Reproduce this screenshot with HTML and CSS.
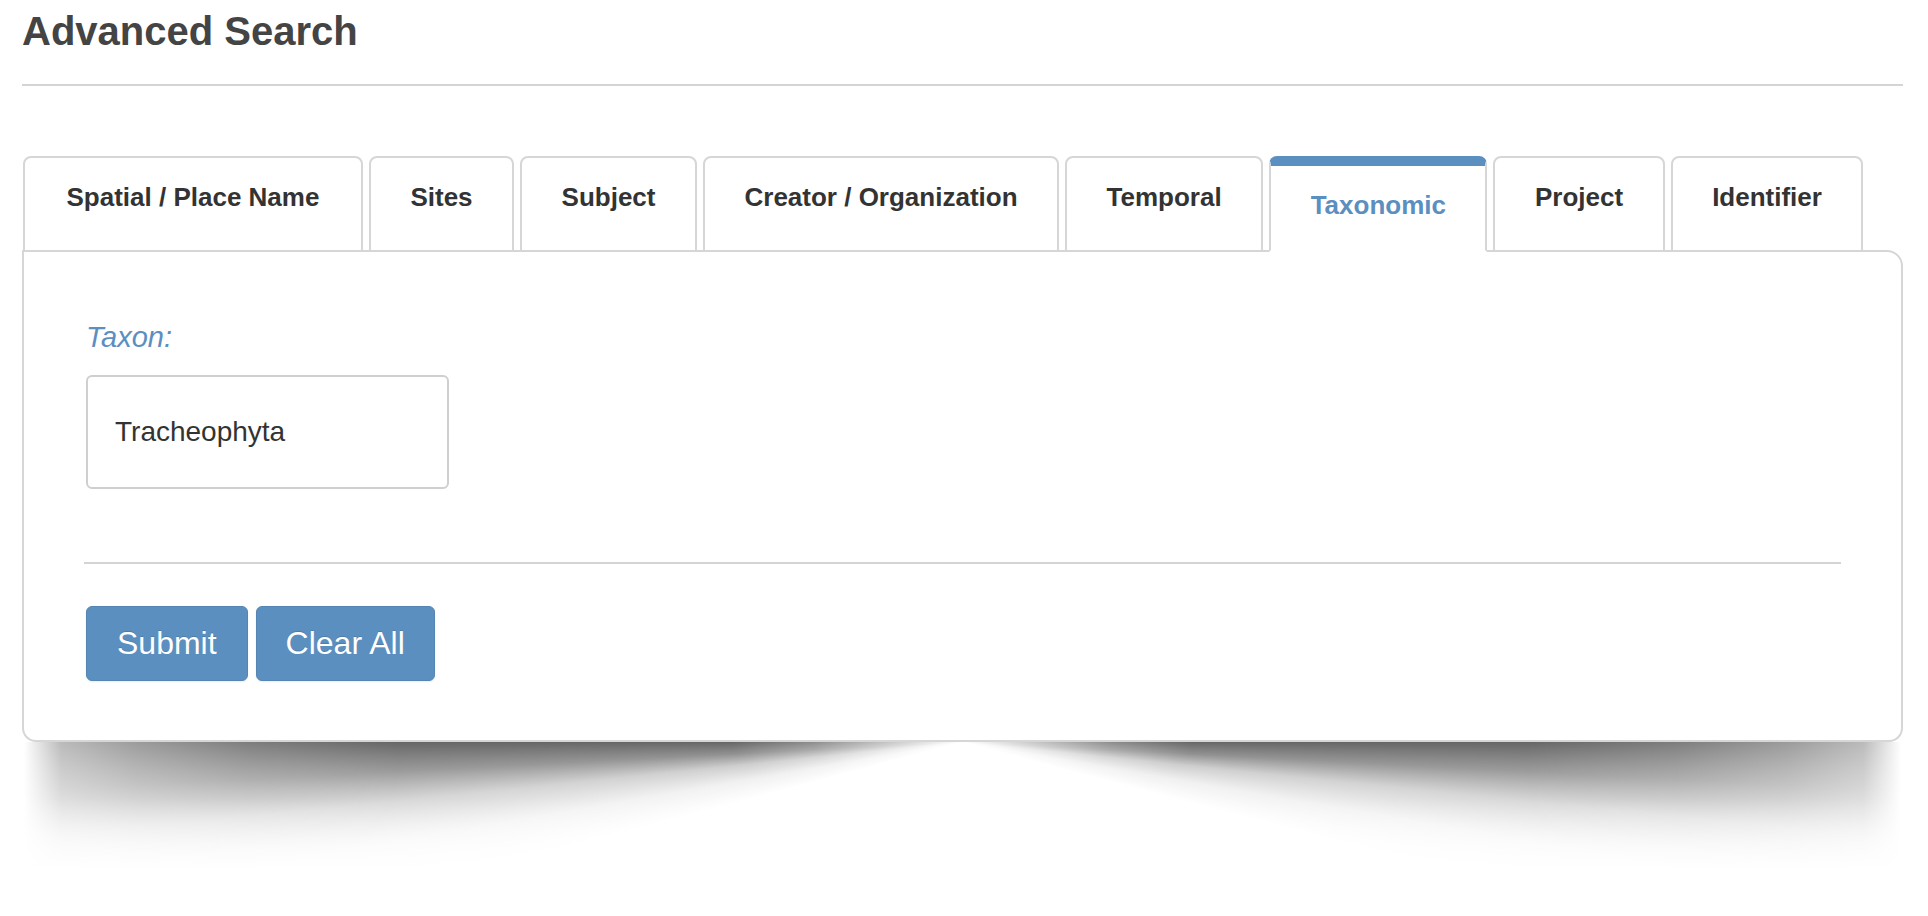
FILE: index.html
```html
<!DOCTYPE html>
<html lang="en">
<head>
<meta charset="utf-8">
<title>Advanced Search</title>
<link rel="stylesheet" href="styles.css">
</head>
<body>
<div class="page">
  <h1 class="title">Advanced Search</h1>
  <hr class="rule">
  <div class="search">
    <ul class="tabs">
      <li class="tab">Spatial / Place Name</li>
      <li class="tab">Sites</li>
      <li class="tab">Subject</li>
      <li class="tab">Creator / Organization</li>
      <li class="tab">Temporal</li>
      <li class="tab tab--active">Taxonomic</li>
      <li class="tab">Project</li>
      <li class="tab">Identifier</li>
    </ul>
    <div class="panel">
      <label class="field-label" for="taxon">Taxon:</label>
      <input class="field-input" id="taxon" type="text" value="Tracheophyta">
      <hr class="panel-rule">
      <div class="actions">
        <button class="btn" type="button">Submit</button>
        <button class="btn" type="button">Clear All</button>
      </div>
    </div>
    <div class="panel-shadow"></div>
  </div>
</div>
</body>
</html>
```
FILE: styles.css
```css
body {
  margin: 0;
  background: #fff;
  color: #333;
  font-family: "Liberation Sans", Arial, Helvetica, sans-serif;
}

.page {
  padding: 0 25px 0 22px;
}

.title {
  margin: 8px 0 0;
  font-size: 40px;
  line-height: 46px;
  font-weight: bold;
  color: #444;
}

.rule {
  margin: 30px 0 0;
  height: 2px;
  border: 0;
  background: #d4d4d4;
}

.search {
  margin-top: 70px;
}

.tabs {
  display: flex;
  gap: 6px;
  list-style: none;
  margin: 0;
  padding: 0 0 0 1px;
}

.tab {
  box-sizing: border-box;
  height: 96px;
  margin-bottom: -2px;
  padding: 21px 39.5px 0;
  border: 2px solid #d6d6d6;
  border-radius: 8px 8px 0 0;
  background: #fff;
  font-size: 26px;
  line-height: 37px;
  font-weight: bold;
  color: #333;
  white-space: nowrap;
  position: relative;
  z-index: 1;
}

.tab:first-child {
  padding: 21px 41.5px 0;
}

.tab--active {
  border-top: 10px solid #5b8fbf;
  border-bottom-color: #fff;
  color: #5b8fbf;
}

.panel {
  padding: 66px 60px 59px;
  border: 2px solid #d6d6d6;
  border-radius: 0 16px 14px 14px;
  background: #fff;
}

.field-label {
  display: block;
  padding-left: 2px;
  font-size: 29px;
  line-height: 39px;
  font-style: italic;
  color: #5b8fbf;
}

.field-input {
  display: block;
  box-sizing: border-box;
  width: 363px;
  height: 114px;
  margin: 18px 0 0 2px;
  padding: 0 27px;
  border: 2px solid #cfcfcf;
  border-radius: 6px;
  background: #fff;
  font-family: "Liberation Sans", Arial, sans-serif;
  font-size: 28px;
  color: #333;
  outline: none;
}

.panel-rule {
  margin: 73px 0 0;
  height: 2px;
  border: 0;
  background: #d4d4d4;
}

.actions {
  display: flex;
  gap: 8px;
  margin-top: 42px;
  padding-left: 2px;
}

.btn {
  box-sizing: border-box;
  height: 75px;
  padding: 0 30px;
  border: 1px solid #5585b3;
  border-radius: 6px;
  background: #5b8fbf;
  color: #fff;
  font-family: "Liberation Sans", Arial, sans-serif;
  font-size: 32px;
  text-shadow: 0 -1px 0 rgba(0, 0, 0, 0.15);
  box-shadow: 0 1px 2px rgba(0, 0, 0, 0.08);
  cursor: pointer;
}

.btn + .btn {
  padding: 0 29px;
}

.panel-shadow {
  height: 128px;
  margin: 0 2px;
  background:
    linear-gradient(to right, #fff 0%, rgba(255, 255, 255, 0.55) 2%, rgba(255, 255, 255, 0.35) 6%, rgba(255, 255, 255, 0.15) 12%, rgba(255, 255, 255, 0) 20%, rgba(255, 255, 255, 0) 80%, rgba(255, 255, 255, 0.15) 88%, rgba(255, 255, 255, 0.35) 94%, rgba(255, 255, 255, 0.55) 98%, #fff 100%),
    linear-gradient(to bottom, rgba(255, 255, 255, 0) 0%, rgba(255, 255, 255, 0.3) 45%, rgba(255, 255, 255, 0.8) 80%, #fff 100%),
    radial-gradient(ellipse 230px 70px at 50% 0%, #fff 0%, rgba(255, 255, 255, 0.65) 30%, rgba(255, 255, 255, 0.25) 65%, rgba(255, 255, 255, 0) 100%),
    conic-gradient(from 90deg at 50% 0%,
      rgba(0, 0, 0, 0.6) 0deg,
      rgba(0, 0, 0, 0.46) 3deg,
      rgba(0, 0, 0, 0.22) 6deg,
      rgba(0, 0, 0, 0.07) 10deg,
      rgba(0, 0, 0, 0) 15deg,
      rgba(0, 0, 0, 0) 165deg,
      rgba(0, 0, 0, 0.07) 170deg,
      rgba(0, 0, 0, 0.22) 174deg,
      rgba(0, 0, 0, 0.46) 177deg,
      rgba(0, 0, 0, 0.6) 180deg);
}
```
